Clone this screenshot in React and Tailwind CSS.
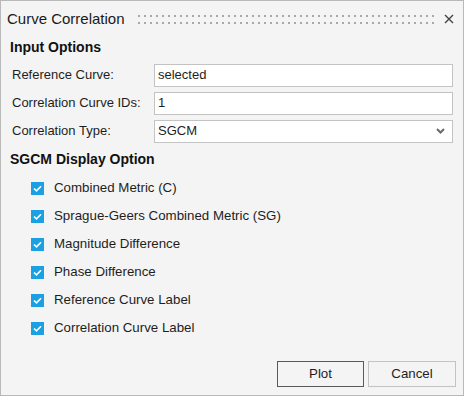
import React from 'react';

const options = [
  'Combined Metric (C)',
  'Sprague-Geers Combined Metric (SG)',
  'Magnitude Difference',
  'Phase Difference',
  'Reference Curve Label',
  'Correlation Curve Label',
];

function Grip() {
  return (
    <svg className="flex-1 h-[10px] ml-[12px] mr-[10px]" preserveAspectRatio="none">
      <defs>
        <pattern id="grip" width="6" height="7" patternUnits="userSpaceOnUse">
          <rect x="1" y="1" width="2" height="2" fill="#a8a8a8" />
        </pattern>
      </defs>
      <rect x="0" y="0" width="100%" height="10" fill="url(#grip)" />
    </svg>
  );
}

function Field({ label, value, select }) {
  return (
    <div className="h-[28px] flex items-center">
      <span className="w-[153px] shrink-0 pl-[11px] text-[13px] text-[#1e1e1e]">{label}</span>
      <div className="w-[299px] h-[23px] bg-white border border-[#c3c3c3] flex items-center pl-[3px] pr-[7px] text-[13px] text-[#1e1e1e]">
        <span className="flex-1">{value}</span>
        {select && (
          <svg width="9" height="6" viewBox="0 0 9 6">
            <path d="M1 1 L4.5 4.5 L8 1" stroke="#6a6a6a" strokeWidth="2" fill="none" />
          </svg>
        )}
      </div>
    </div>
  );
}

function Check({ label }) {
  return (
    <div className="h-[28px] flex items-center pl-[30px]">
      <div className="w-[13px] h-[13px] bg-[#1ba1e2] flex items-center justify-center">
        <svg width="9" height="7" viewBox="0 0 9 7">
          <path d="M1 3.5 L3.5 5.8 L8 1.2" stroke="white" strokeWidth="1.6" fill="none" />
        </svg>
      </div>
      <span className="ml-[10px] text-[13.3px] text-[#1e1e1e]">{label}</span>
    </div>
  );
}

export default function App() {
  return (
    <div
      className="w-[464px] h-[396px] bg-[#f4f4f4] border border-[#b9b9b9] flex flex-col"
      style={{ fontFamily: '"Liberation Sans", Arial, sans-serif' }}
    >
      <div className="h-[36px] flex items-center pl-[6px] pr-[9px]">
        <span className="text-[15px] text-[#1a1a1a]">Curve Correlation</span>
        <Grip />
        <svg width="10" height="10" viewBox="0 0 10 10">
          <path d="M1 1 L9 9 M9 1 L1 9" stroke="#444" strokeWidth="1.4" />
        </svg>
      </div>

      <div className="h-[20px] flex items-center pl-[9px] text-[14px] font-bold text-[#111]">Input Options</div>
      <div className="mt-[4px]">
        <Field label="Reference Curve:" value="selected" />
        <Field label="Correlation Curve IDs:" value="1" />
        <Field label="Correlation Type:" value="SGCM" select />
      </div>

      <div className="mt-[4px] h-[20px] flex items-center pl-[9px] text-[14px] font-bold text-[#111]">SGCM Display Option</div>
      <div className="mt-[5px]">
        {options.map((o) => (
          <Check key={o} label={o} />
        ))}
      </div>

      <div className="mt-auto flex justify-end gap-[4px] pr-[7px] pb-[8px]">
        <button className="w-[87px] h-[26px] border border-[#5a5a5a] bg-[#f4f4f4] text-[13.3px] text-[#1e1e1e]">Plot</button>
        <button className="w-[88px] h-[26px] border border-[#c3c3c3] bg-[#f4f4f4] text-[13.3px] text-[#1e1e1e]">Cancel</button>
      </div>
    </div>
  );
}
